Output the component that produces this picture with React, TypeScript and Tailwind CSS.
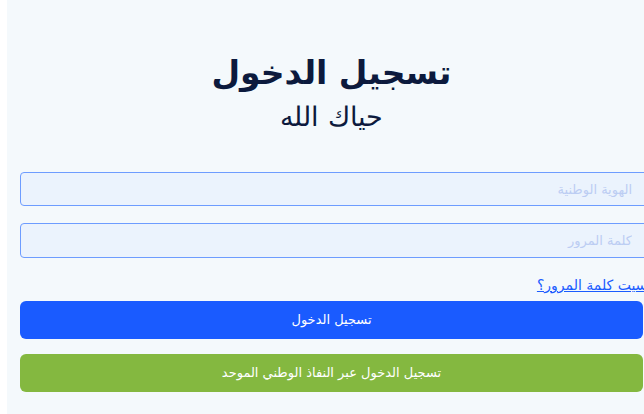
import { useState } from 'react';

export default function App() {
  const [nationalId, setNationalId] = useState('');
  const [password, setPassword] = useState('');

  return (
    <div className="flex h-[414px] w-[644px] overflow-hidden bg-white font-['DejaVu_Sans',sans-serif]">
      <div className="w-[7px] shrink-0" />
      {/* panel is wider than the window, its right side is cut off */}
      <div className="h-full w-[660px] shrink-0 bg-[#f4f9fc] pl-[13px] pt-[50px]">
        <div dir="rtl" className="w-[623px] text-center text-[#0c1a3d]">
          <h1 className="text-[33px] font-bold leading-[46px] tracking-[1.5px]">تسجيل الدخول</h1>
          <p className="mt-[3px] text-[27px] font-light leading-[36px]">حياك الله</p>
        </div>

        <div dir="rtl" className="mt-[37px] flex w-[640px] flex-col gap-[17px]">
          <input
            value={nationalId}
            onChange={(e) => setNationalId(e.target.value)}
            placeholder="الهوية الوطنية"
            className="h-[34px] w-full rounded-[4px] border border-[#6d9cff] bg-[#ebf3fd] pr-[27px] text-[13px] text-[#1c2b4a] outline-none placeholder:text-[#bccdf3]"
          />
          <input
            type="password"
            value={password}
            onChange={(e) => setPassword(e.target.value)}
            placeholder="كلمة المرور"
            className="h-[35px] w-full rounded-[4px] border border-[#6d9cff] bg-[#ebf3fd] pr-[27px] text-[13px] text-[#1c2b4a] outline-none placeholder:text-[#bccdf3]"
          />
        </div>

        <div dir="rtl" className="mt-[15px] w-[632px] text-right">
          <a href="#" className="text-[14px] leading-[18px] text-[#1a5cff] underline">
            نسيت كلمة المرور؟
          </a>
        </div>

        <div dir="rtl" className="mt-[4px] flex w-[623px] flex-col gap-[15px]">
          <button className="h-[38px] w-full rounded-[6px] bg-[#1a5bff] text-[13px] text-white">تسجيل الدخول</button>
          <button className="h-[38px] w-full rounded-[6px] bg-[#84b840] text-[13px] text-white">
            تسجيل الدخول عبر النفاذ الوطني الموحد
          </button>
        </div>
      </div>
    </div>
  );
}
